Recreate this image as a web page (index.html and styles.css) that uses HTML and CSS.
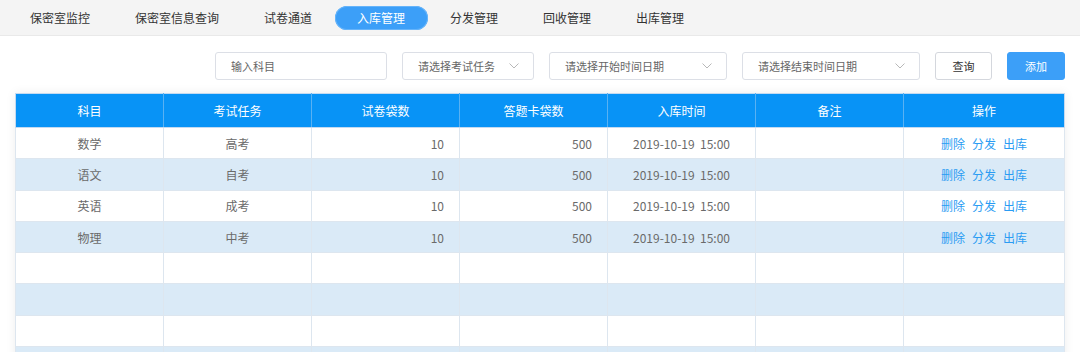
FILE: index.html
```html
<!DOCTYPE html>
<html lang="zh-CN">
<head>
<meta charset="utf-8">
<title>入库管理</title>
<link rel="stylesheet" href="styles.css">
</head>
<body>
<nav class="nav">
  <span class="tab">保密室监控</span>
  <span class="tab">保密室信息查询</span>
  <span class="tab">试卷通道</span>
  <span class="tab tab-active">入库管理</span>
  <span class="tab">分发管理</span>
  <span class="tab">回收管理</span>
  <span class="tab">出库管理</span>
</nav>
<div class="filters">
  <div class="field w-subject">输入科目</div>
  <div class="field w-task">请选择考试任务<svg class="chev" viewBox="0 0 10 6"><polyline points="0.5,0.5 5,5 9.5,0.5"/></svg></div>
  <div class="field w-date">请选择开始时间日期<svg class="chev" viewBox="0 0 10 6"><polyline points="0.5,0.5 5,5 9.5,0.5"/></svg></div>
  <div class="field w-date">请选择结束时间日期<svg class="chev" viewBox="0 0 10 6"><polyline points="0.5,0.5 5,5 9.5,0.5"/></svg></div>
  <button class="btn btn-plain">查询</button>
  <button class="btn btn-primary">添加</button>
</div>
<div class="table-wrap">
  <table class="grid">
    <colgroup>
      <col class="c"><col class="c"><col class="c"><col class="c"><col class="c"><col class="c"><col>
    </colgroup>
    <thead>
      <tr><th>科目</th><th>考试任务</th><th>试卷袋数</th><th>答题卡袋数</th><th>入库时间</th><th>备注</th><th>操作</th></tr>
    </thead>
    <tbody>
      <tr><td>数学</td><td>高考</td><td class="num">10</td><td class="num">500</td><td class="time">2019-10-19&nbsp;&nbsp;15:00</td><td></td><td class="ops"><a>删除</a><a>分发</a><a>出库</a></td></tr>
      <tr><td>语文</td><td>自考</td><td class="num">10</td><td class="num">500</td><td class="time">2019-10-19&nbsp;&nbsp;15:00</td><td></td><td class="ops"><a>删除</a><a>分发</a><a>出库</a></td></tr>
      <tr><td>英语</td><td>成考</td><td class="num">10</td><td class="num">500</td><td class="time">2019-10-19&nbsp;&nbsp;15:00</td><td></td><td class="ops"><a>删除</a><a>分发</a><a>出库</a></td></tr>
      <tr><td>物理</td><td>中考</td><td class="num">10</td><td class="num">500</td><td class="time">2019-10-19&nbsp;&nbsp;15:00</td><td></td><td class="ops"><a>删除</a><a>分发</a><a>出库</a></td></tr>
      <tr><td></td><td></td><td></td><td></td><td></td><td></td><td></td></tr>
      <tr><td></td><td></td><td></td><td></td><td></td><td></td><td></td></tr>
      <tr><td></td><td></td><td></td><td></td><td></td><td></td><td></td></tr>
      <tr><td></td><td></td><td></td><td></td><td></td><td></td><td></td></tr>
      <tr><td></td><td></td><td></td><td></td><td></td><td></td><td></td></tr>
    </tbody>
  </table>
</div>
</body>
</html>
```
FILE: styles.css
```css
* { box-sizing: border-box; }
html, body { margin: 0; padding: 0; background: #fff; }
body {
  font-family: "Noto Sans CJK SC", "Microsoft YaHei", sans-serif;
  font-size: 12px;
  color: #333;
  overflow: hidden;
}

.nav {
  display: flex;
  align-items: center;
  height: 36px;
  padding-left: 7.5px;
  background: #f4f4f4;
  border-bottom: 1px solid #e9e9e9;
}
.tab {
  height: 24px;
  line-height: 24px;
  padding: 0 22.5px;
  font-size: 12px;
  color: #333;
  border-radius: 12px;
  white-space: nowrap;
}
.tab-active {
  background: #3c9ff8;
  color: #fff;
  box-shadow: inset 0 0 0 1px #66b4fa;
}

.filters {
  display: flex;
  justify-content: flex-end;
  gap: 15px;
  padding: 16px 15px 0;
}
.field {
  height: 28px;
  display: flex;
  align-items: center;
  justify-content: space-between;
  padding: 0 14px 0 15px;
  border: 1px solid #dcdfe6;
  border-radius: 3px;
  font-size: 11px;
  color: #666;
  background: #fff;
}
.w-subject { width: 172px; }
.w-task { width: 132px; }
.w-date { width: 178px; }
.chev {
  width: 10px;
  height: 6px;
  fill: none;
  stroke: #b8b8b8;
  stroke-width: 1;
}
.btn {
  height: 28px;
  border-radius: 3px;
  font-family: inherit;
  font-size: 11px;
  padding: 0;
}
.btn-plain {
  width: 57px;
  background: #fff;
  border: 1px solid #d4d7dd;
  color: #333;
}
.btn-primary {
  width: 58px;
  background: #3c9ff8;
  border: 1px solid #3c9ff8;
  color: #fff;
}

.table-wrap {
  margin: 13px 15px 0;
  box-shadow: 0 0 10px rgba(0, 0, 0, 0.07);
}
.grid {
  width: 100%;
  border-collapse: collapse;
  table-layout: fixed;
  border: 1px solid #c4daf1;
}
.grid col.c { width: 148px; }
.grid th {
  height: 34px;
  background: #0893f6;
  color: #fff;
  font-weight: normal;
  font-size: 12px;
  border-left: 1px solid #58b1f3;
  border-bottom: 1px solid #c4daf1;
  padding: 0;
}
.grid th:first-child { border-left: none; }
.grid td {
  height: 31.3px;
  padding: 0;
  text-align: center;
  color: #6a6a6a;
  font-size: 12px;
  border: 1px solid #dde6ef;
}
.grid tbody tr:nth-child(even) td { background: #daeaf7; }
.grid td.num {
  text-align: right;
  padding-right: 15px;
}
.grid td.time { white-space: pre; }
.ops a {
  color: #2a9cf3;
  margin: 0 3.5px;
  cursor: pointer;
}
```
